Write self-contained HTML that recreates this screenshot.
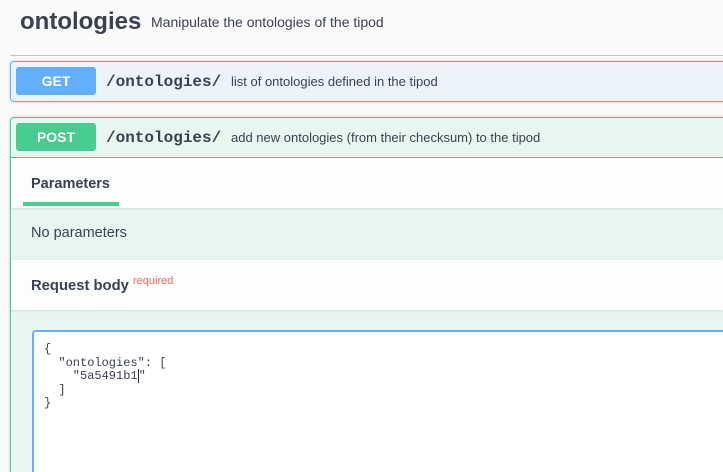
<!DOCTYPE html>
<html style="width:723px;height:472px;overflow:hidden"><head><style>
*{margin:0;padding:0;box-sizing:border-box}
body{width:723px;height:472px;overflow:hidden;background:#fafafa;font-family:"Liberation Sans",sans-serif;color:#3b4151;position:relative}
.a{position:absolute}
.btn{position:absolute;width:80px;height:28px;border-radius:3px;color:#fff;font-weight:bold;font-size:14px;text-align:center;line-height:28px}
.path{position:absolute;font-family:"Liberation Mono",monospace;font-weight:bold;font-size:16px;color:#3b4151}
.desc{position:absolute;font-size:13px;color:#3b4151}
</style></head><body>
<div class="a" style="left:20px;top:8px;font-size:24px;font-weight:bold;">ontologies</div>
<div class="a" style="left:151px;top:14px;font-size:14px;">Manipulate the ontologies of the tipod</div>
<div class="a" style="left:10px;top:55px;width:713px;height:1px;background:#c4c4c4"></div>

<div class="a" style="left:10px;top:61px;width:730px;height:41px;border:1px solid #61affe;border-radius:4px;background:#ebf3fb;box-shadow:0 0 3px rgba(0,0,0,.19)"></div>
<div class="btn" style="left:16px;top:67px;background:#61affe">GET</div>
<div class="path" style="left:106px;top:73px">/ontologies/</div>
<div class="desc" style="left:231px;top:74px">list of ontologies defined in the tipod</div>

<div class="a" style="left:10px;top:117px;width:730px;height:360px;border:1px solid #49cc90;border-radius:4px;background:#e8f6f0;box-shadow:0 0 3px rgba(0,0,0,.19)"></div>
<div class="btn" style="left:16px;top:123px;background:#49cc90">POST</div>
<div class="path" style="left:106px;top:129px">/ontologies/</div>
<div class="desc" style="left:231px;top:130px">add new ontologies (from their checksum) to the tipod</div>
<div class="a" style="left:11px;top:157px;width:712px;height:1px;background:#49cc90"></div>

<div class="a" style="left:11px;top:158px;width:712px;height:50px;background:rgba(255,255,255,.85);box-shadow:0 1px 2px rgba(0,0,0,.1)"></div>
<div class="a" style="left:31px;top:176px;font-size:14.5px;font-weight:bold">Parameters</div>
<div class="a" style="left:23px;top:202px;width:96px;height:4px;background:#49cc90"></div>
<div class="a" style="left:31px;top:225px;font-size:14.5px">No parameters</div>

<div class="a" style="left:11px;top:260px;width:712px;height:50px;background:rgba(255,255,255,.85);box-shadow:0 1px 2px rgba(0,0,0,.1)"></div>
<div class="a" style="left:31px;top:278px;font-size:14.8px;font-weight:bold">Request body</div>
<div class="a" style="left:133px;top:275px;font-size:11px;color:#ff6060">required</div>

<div class="a" style="left:32px;top:330px;width:720px;height:160px;border:2px solid #61affe;border-radius:4px;background:#fff"></div>
<pre class="a" style="left:44px;top:343px;font-family:'Liberation Mono',monospace;font-size:12px;line-height:13.6px;color:#3b4151">{
  "ontologies": [
    "5a5491b1<span style="border-left:1px solid #333;margin-left:0"></span>"
  ]
}</pre>
</body></html>
